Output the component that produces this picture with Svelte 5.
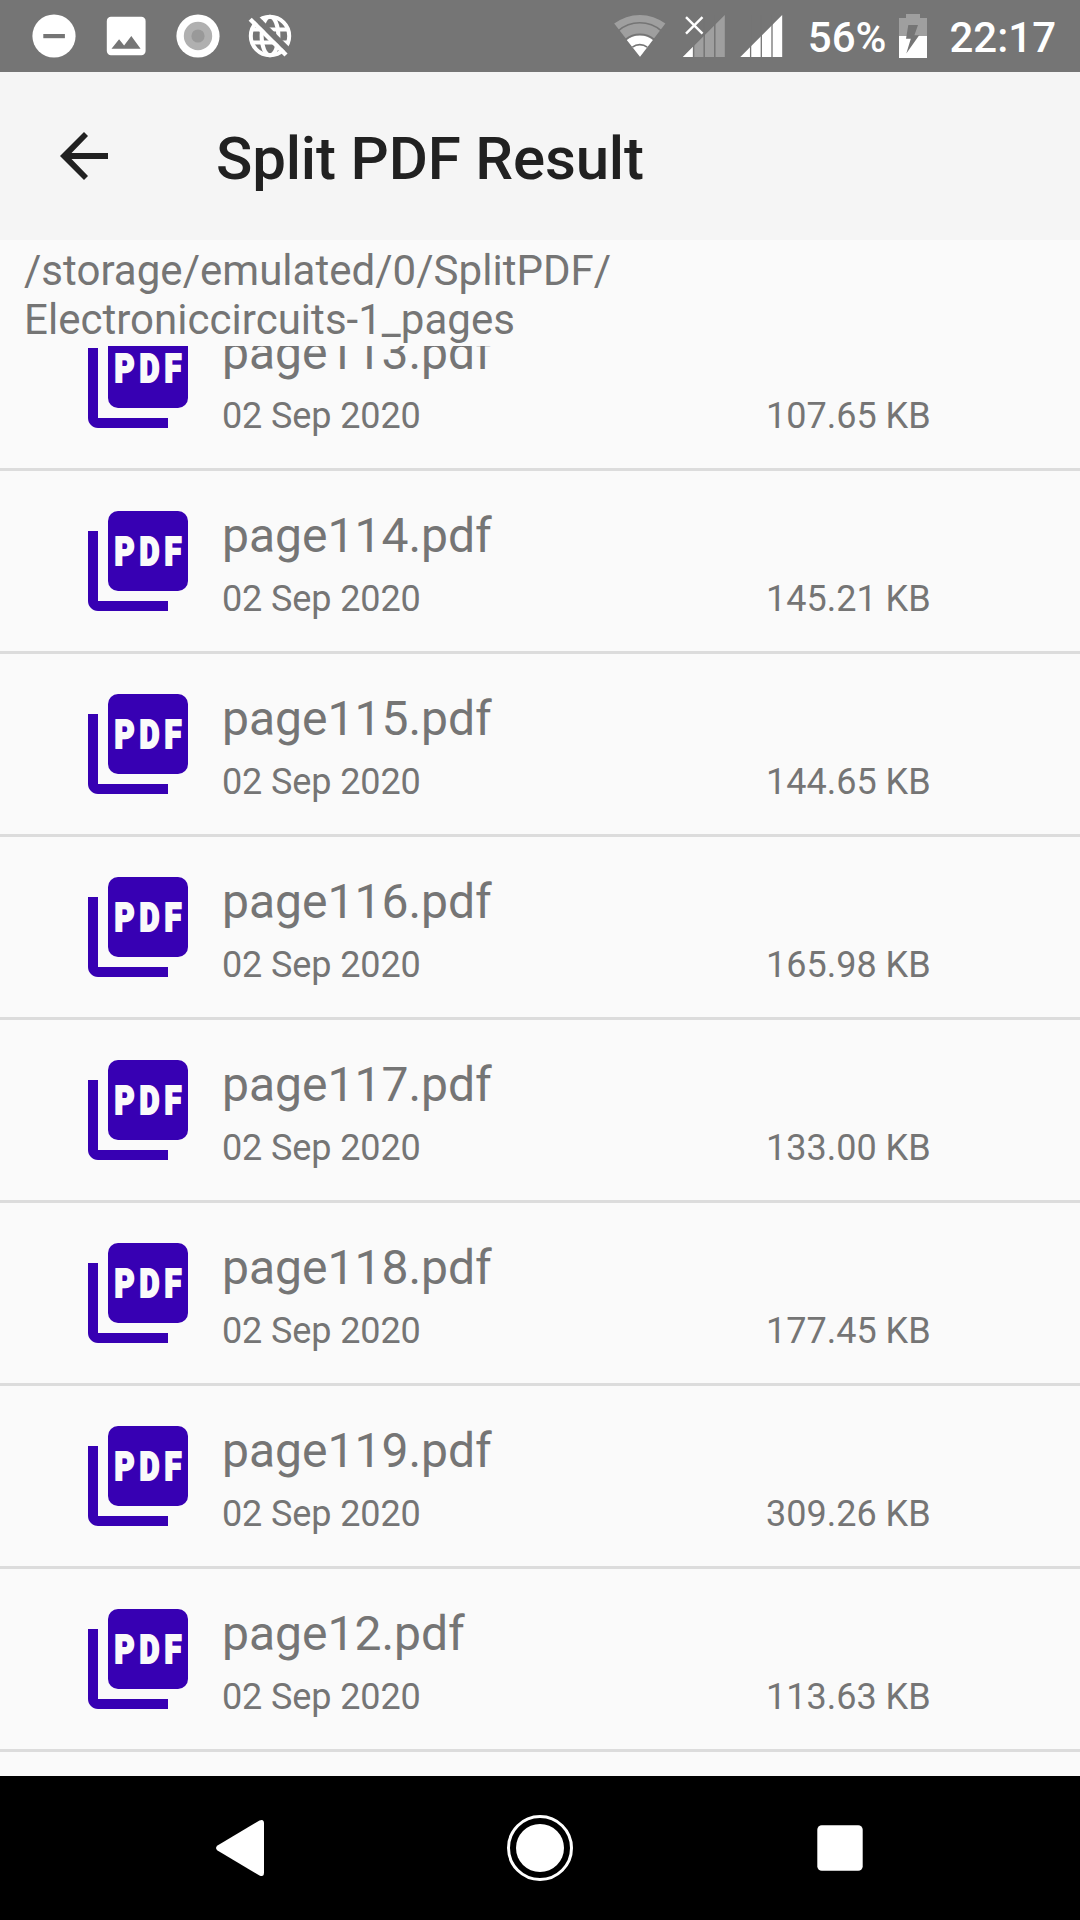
<script lang="ts">
	let folder = '/storage/emulated/0/SplitPDF/\nElectroniccircuits-1_pages';

	let files = $state([
		{ name: 'page113.pdf', date: '02 Sep 2020', size: '107.65 KB' },
		{ name: 'page114.pdf', date: '02 Sep 2020', size: '145.21 KB' },
		{ name: 'page115.pdf', date: '02 Sep 2020', size: '144.65 KB' },
		{ name: 'page116.pdf', date: '02 Sep 2020', size: '165.98 KB' },
		{ name: 'page117.pdf', date: '02 Sep 2020', size: '133.00 KB' },
		{ name: 'page118.pdf', date: '02 Sep 2020', size: '177.45 KB' },
		{ name: 'page119.pdf', date: '02 Sep 2020', size: '309.26 KB' },
		{ name: 'page12.pdf', date: '02 Sep 2020', size: '113.63 KB' }
	]);
</script>

<div class="screen">
	<div class="status-bar">
		<div class="notifications">
			<svg width="44" height="44" viewBox="0 0 44 44">
				<circle cx="22" cy="22" r="21.6" fill="#fff" />
				<rect x="11.3" y="20" width="21.6" height="4.2" fill="#757575" />
			</svg>
			<svg width="44" height="44" viewBox="0 0 44 44">
				<rect x="2.8" y="2.8" width="38.8" height="38.4" rx="4.2" fill="#fff" />
				<path d="M7.5 34.8l7.6-9.6 5 6.2 7.2-9.3 9.3 12.7z" fill="#757575" />
			</svg>
			<svg width="44" height="44" viewBox="0 0 44 44">
				<circle cx="22" cy="22" r="21.6" fill="#fff" />
				<circle cx="22" cy="22" r="14.2" fill="#b0b0b0" />
				<circle cx="22" cy="22" r="6.6" fill="#999" />
			</svg>
			<svg width="44" height="44" viewBox="0 0 44 44">
				<g fill="none" stroke="#fff" stroke-width="4">
					<circle cx="22" cy="22" r="19.2" />
					<ellipse cx="22" cy="22" rx="8.4" ry="19.2" />
					<path d="M3.5 15.5h37M3.5 28.5h37" />
				</g>
				<path d="M3 -1L44 40" stroke="#757575" stroke-width="6" />
				<path d="M2.2 5.2L38 41" stroke="#fff" stroke-width="4.4" />
			</svg>
		</div>
		<svg class="wifi" width="52" height="44" viewBox="0 0 52 44">
			<path d="M26 42.8L.2 9.6A42 42 0 0 1 51.4 9.6z" fill="#9f9f9f" />
			<path d="M26 42.8L12.8 26A21.5 21.5 0 0 1 38.8 26z" fill="#fff" />
			<g fill="none" stroke="#757575" stroke-width="1.7">
				<path d="M4.2 16.8A33 33 0 0 1 47.4 16.8" />
				<path d="M11.6 25.5A22.3 22.3 0 0 1 40.2 25.5" />
				<path d="M18.4 33.2A12 12 0 0 1 33.2 33.2" />
			</g>
		</svg>
		<svg class="signal" width="44" height="44" viewBox="0 0 44 44">
			<path d="M.8 43L42.8 1v42z" fill="#9f9f9f" />
			<path d="M.8 43L11 32.8V43z" fill="#fff" />
			<path d="M11.6 1v42M22.2 1v42M32.8 1v42" stroke="#757575" stroke-width="1.5" />
			<path d="M4 3l17 17M21 3L4 20" stroke="#757575" stroke-width="4" />
			<path d="M4 3.2l16.5 16.5M20.5 3.2L4 19.7" stroke="#fff" stroke-width="2.4" />
		</svg>
		<svg class="signal" width="44" height="44" viewBox="0 0 44 44">
			<path d="M.3 43L42.2 1v42z" fill="#fff" />
			<path d="M10.6 1v42M21.3 1v42M32 1v42" stroke="#757575" stroke-width="1.3" />
		</svg>
		<span class="percent">56%</span>
		<svg class="battery" width="28" height="44" viewBox="0 0 28 44">
			<path d="M0 4h7V0h14v4h7v18H0z" fill="#9f9f9f" />
			<path d="M0 22h28v22H0z" fill="#fff" />
			<path d="M9.3 11H19l-3.6 10.2h4.8L7.3 39.5l4.5-14.7H7z" fill="#757575" />
		</svg>
		<span class="clock">22:17</span>
	</div>

	<header class="app-bar">
		<button class="back" aria-label="Back">
			<svg width="48" height="48" viewBox="0 0 48 48">
				<path d="M48 21H11.5L28 3.9 24 0 0 24l24 24 4-3.9L11.5 27H48z" fill="#212121" />
			</svg>
		</button>
		<h1>Split PDF Result</h1>
	</header>

	<p class="folder">{folder}</p>

	<main class="list">
		{#each files as file}
			<div class="file">
				<svg width="120" height="120" viewBox="0 0 24 24">
					<g fill="#3700b3">
						<rect x="6" y="2" width="16" height="16" rx="2" />
						<path d="M4 6H2v14c0 1.1.9 2 2 2h14v-2H4V6z" />
					</g>
					<text transform="scale(.78 1)" x="9.35 15.75 22.15" y="12.8">PDF</text>
				</svg>
				<div class="info">
					<div class="name">{file.name}</div>
					<div class="meta">
						<span class="date">{file.date}</span>
						<span>{file.size}</span>
					</div>
				</div>
			</div>
		{/each}
	</main>

	<nav class="nav-bar">
		<svg width="72" height="72" viewBox="0 0 72 72">
			<path d="M13.5 33.5L55.5 8.5Q60 6.5 60 11.5V60.5Q60 65.5 55.5 63.5L13.5 38.5Q10.5 36 13.5 33.5z" fill="#fff" />
		</svg>
		<svg width="72" height="72" viewBox="0 0 72 72">
			<circle cx="36" cy="36" r="31.5" fill="none" stroke="#fff" stroke-width="3" />
			<circle cx="36" cy="36" r="24" fill="#fff" />
		</svg>
		<svg width="72" height="72" viewBox="0 0 72 72">
			<rect x="13.3" y="13.3" width="45.4" height="45.4" rx="4.5" fill="#fff" />
		</svg>
	</nav>
</div>

<style>
	:global(body) {
		margin: 0;
	}
	.screen {
		width: 1080px;
		height: 1920px;
		display: flex;
		flex-direction: column;
		overflow: hidden;
		background: #fafafa;
		color: #757575;
		font-family: Roboto, sans-serif;
	}
	svg {
		display: block;
		flex: none;
	}

	/* status bar */
	.status-bar {
		height: 72px;
		flex: none;
		display: flex;
		align-items: center;
		box-sizing: border-box;
		padding: 0 24px 0 32px;
		background: #757575;
		color: #fff;
		font-size: 42px;
		font-weight: 500;
		line-height: 72px;
	}
	.notifications {
		display: flex;
		gap: 28px;
		margin-right: auto;
	}
	.wifi {
		margin-right: 16px;
	}
	.signal {
		margin-right: 14px;
	}
	.percent {
		margin: 3px 13px 0 10px;
	}
	.clock {
		margin: 3px 0 0 22px;
	}

	/* toolbar */
	.app-bar {
		height: 168px;
		flex: none;
		display: flex;
		align-items: center;
		background: #f5f5f5;
	}
	.back {
		margin: 0 108px 0 60px;
		padding: 0;
		border: none;
		background: none;
	}
	h1 {
		margin: 4px 0 0;
		color: #212121;
		font-size: 60px;
		font-weight: 500;
		letter-spacing: -0.16px;
	}

	.folder {
		height: 106px;
		flex: none;
		box-sizing: border-box;
		margin: 0;
		padding: 6px 24px 0;
		font-size: 42px;
		line-height: 49px;
		letter-spacing: 0.03px;
		white-space: pre-line;
	}

	/* the list is scrolled part way through its first row */
	.list {
		flex: 1;
		min-height: 0;
		overflow: hidden;
	}
	.file {
		height: 120px;
		display: flex;
		padding: 30px 78px;
		border-bottom: 3px solid #dcdcdc;
	}
	.file:first-child {
		margin-top: -58px;
	}
	.file text {
		fill: #fafafa;
		stroke: #fafafa;
		stroke-width: 0.4;
		font-size: 7.9px;
		font-weight: 900;
	}
	.info {
		flex: 1;
		padding-left: 24px;
	}
	.name {
		margin-top: 7px;
		font-size: 48px;
		line-height: 56px;
	}
	.meta {
		display: grid;
		grid-template-columns: 544px 1fr;
		margin-top: 14px;
		font-size: 36px;
		line-height: 42px;
	}
	.date {
		letter-spacing: -0.12px;
	}

	/* system navigation */
	.nav-bar {
		height: 144px;
		flex: none;
		display: flex;
		align-items: center;
		justify-content: center;
		gap: 228px;
		background: #000;
	}
</style>
